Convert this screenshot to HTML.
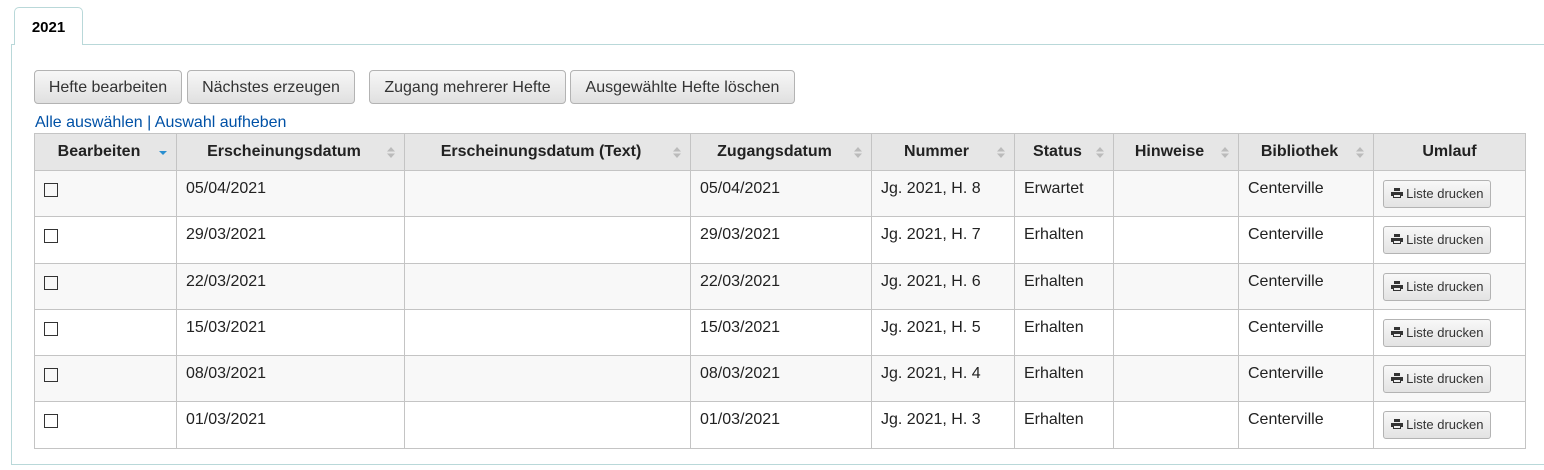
<!DOCTYPE html>
<html><head><style>
body{margin:0;background:#fff;font-family:"Liberation Sans",sans-serif;font-size:16px;color:#000;width:1544px;height:470px;overflow:hidden;position:relative}
.tab{position:absolute;left:14px;top:7px;width:69px;height:38px;border:1px solid #b9d8d9;border-bottom:none;border-radius:5px 5px 0 0;background:#fff;z-index:2;font-weight:bold;font-size:15px;line-height:40px;text-align:center;box-sizing:border-box}
.panel{position:absolute;left:11px;top:44px;width:1560px;height:421px;border:1px solid #b9d8d9;box-sizing:border-box}
.btn{position:absolute;top:70px;height:34px;border:1px solid #b3b3b3;border-radius:4px;background:linear-gradient(#f7f7f7,#e0e0e0);box-sizing:border-box;font-size:16px;line-height:34px;text-align:center;color:#333}
.links{position:absolute;left:35px;top:114px;color:#0051a6;font-size:16px}
table{position:absolute;left:34px;top:133px;border-collapse:collapse;width:1492px}
td,th{border:1px solid #c4c4c4;padding:0 9px;box-sizing:border-box}
th{background:#e6e6e6;height:37px;font-weight:bold;font-size:16px;color:#222;position:relative;padding-right:22px}
td{height:46.3px;vertical-align:top;padding-top:9px;color:#222}
tr.o td{background:#f8f8f8}
.s{position:absolute;right:9px;top:13px;width:8px;height:11px}
.cb{display:inline-block;width:14px;height:14px;border:1px solid #333;margin-top:3px;box-sizing:border-box}
.lb{display:inline-block;margin-top:0px;height:28px;width:108px;border:1px solid #b3b3b3;border-radius:3px;background:linear-gradient(#f8f8f8,#e3e3e3);font-size:13px;line-height:26px;text-align:center;box-sizing:border-box;color:#333}
</style></head><body>
<div class="panel"></div>
<div class="tab">2021</div>
<div class="btn" style="left:34px;width:148px">Hefte bearbeiten</div>
<div class="btn" style="left:187px;width:168px">Nächstes erzeugen</div>
<div class="btn" style="left:369px;width:197px">Zugang mehrerer Hefte</div>
<div class="btn" style="left:570px;width:225px">Ausgewählte Hefte löschen</div>
<div class="links">Alle auswählen | Auswahl aufheben</div>
<table>
<tr>
<th style="width:142px">Bearbeiten<svg class="s" viewBox="0 0 8 11"><path d="M0 4h8L4 8z" fill="#2a8fd0"/></svg></th>
<th style="width:228px">Erscheinungsdatum<svg class="s" viewBox="0 0 8 11"><path d="M0 4.5h8L4 0zM0 6.5h8L4 11z" fill="#bbb"/></svg></th>
<th style="width:286px">Erscheinungsdatum (Text)<svg class="s" viewBox="0 0 8 11"><path d="M0 4.5h8L4 0zM0 6.5h8L4 11z" fill="#bbb"/></svg></th>
<th style="width:181px">Zugangsdatum<svg class="s" viewBox="0 0 8 11"><path d="M0 4.5h8L4 0zM0 6.5h8L4 11z" fill="#bbb"/></svg></th>
<th style="width:143px">Nummer<svg class="s" viewBox="0 0 8 11"><path d="M0 4.5h8L4 0zM0 6.5h8L4 11z" fill="#bbb"/></svg></th>
<th style="width:99px">Status<svg class="s" viewBox="0 0 8 11"><path d="M0 4.5h8L4 0zM0 6.5h8L4 11z" fill="#bbb"/></svg></th>
<th style="width:125px">Hinweise<svg class="s" viewBox="0 0 8 11"><path d="M0 4.5h8L4 0zM0 6.5h8L4 11z" fill="#bbb"/></svg></th>
<th style="width:135px">Bibliothek<svg class="s" viewBox="0 0 8 11"><path d="M0 4.5h8L4 0zM0 6.5h8L4 11z" fill="#bbb"/></svg></th>
<th style="padding-right:9px">Umlauf</th>
</tr>
<tr class="o"><td><span class="cb"></span></td><td>05/04/2021</td><td></td><td>05/04/2021</td><td>Jg. 2021, H. 8</td><td>Erwartet</td><td></td><td>Centerville</td><td><span class="lb"><svg width="12" height="10" viewBox="0 0 12 10"><path d="M3 0h6v3H3zM0 4h12v4h-2v2H2V8H0z" fill="#333"/><rect x="3" y="7" width="6" height="2" fill="#eee"/></svg> Liste drucken</span></td></tr>
<tr><td><span class="cb"></span></td><td>29/03/2021</td><td></td><td>29/03/2021</td><td>Jg. 2021, H. 7</td><td>Erhalten</td><td></td><td>Centerville</td><td><span class="lb"><svg width="12" height="10" viewBox="0 0 12 10"><path d="M3 0h6v3H3zM0 4h12v4h-2v2H2V8H0z" fill="#333"/><rect x="3" y="7" width="6" height="2" fill="#eee"/></svg> Liste drucken</span></td></tr>
<tr class="o"><td><span class="cb"></span></td><td>22/03/2021</td><td></td><td>22/03/2021</td><td>Jg. 2021, H. 6</td><td>Erhalten</td><td></td><td>Centerville</td><td><span class="lb"><svg width="12" height="10" viewBox="0 0 12 10"><path d="M3 0h6v3H3zM0 4h12v4h-2v2H2V8H0z" fill="#333"/><rect x="3" y="7" width="6" height="2" fill="#eee"/></svg> Liste drucken</span></td></tr>
<tr><td><span class="cb"></span></td><td>15/03/2021</td><td></td><td>15/03/2021</td><td>Jg. 2021, H. 5</td><td>Erhalten</td><td></td><td>Centerville</td><td><span class="lb"><svg width="12" height="10" viewBox="0 0 12 10"><path d="M3 0h6v3H3zM0 4h12v4h-2v2H2V8H0z" fill="#333"/><rect x="3" y="7" width="6" height="2" fill="#eee"/></svg> Liste drucken</span></td></tr>
<tr class="o"><td><span class="cb"></span></td><td>08/03/2021</td><td></td><td>08/03/2021</td><td>Jg. 2021, H. 4</td><td>Erhalten</td><td></td><td>Centerville</td><td><span class="lb"><svg width="12" height="10" viewBox="0 0 12 10"><path d="M3 0h6v3H3zM0 4h12v4h-2v2H2V8H0z" fill="#333"/><rect x="3" y="7" width="6" height="2" fill="#eee"/></svg> Liste drucken</span></td></tr>
<tr><td><span class="cb"></span></td><td>01/03/2021</td><td></td><td>01/03/2021</td><td>Jg. 2021, H. 3</td><td>Erhalten</td><td></td><td>Centerville</td><td><span class="lb"><svg width="12" height="10" viewBox="0 0 12 10"><path d="M3 0h6v3H3zM0 4h12v4h-2v2H2V8H0z" fill="#333"/><rect x="3" y="7" width="6" height="2" fill="#eee"/></svg> Liste drucken</span></td></tr>
</table>
</body></html>
